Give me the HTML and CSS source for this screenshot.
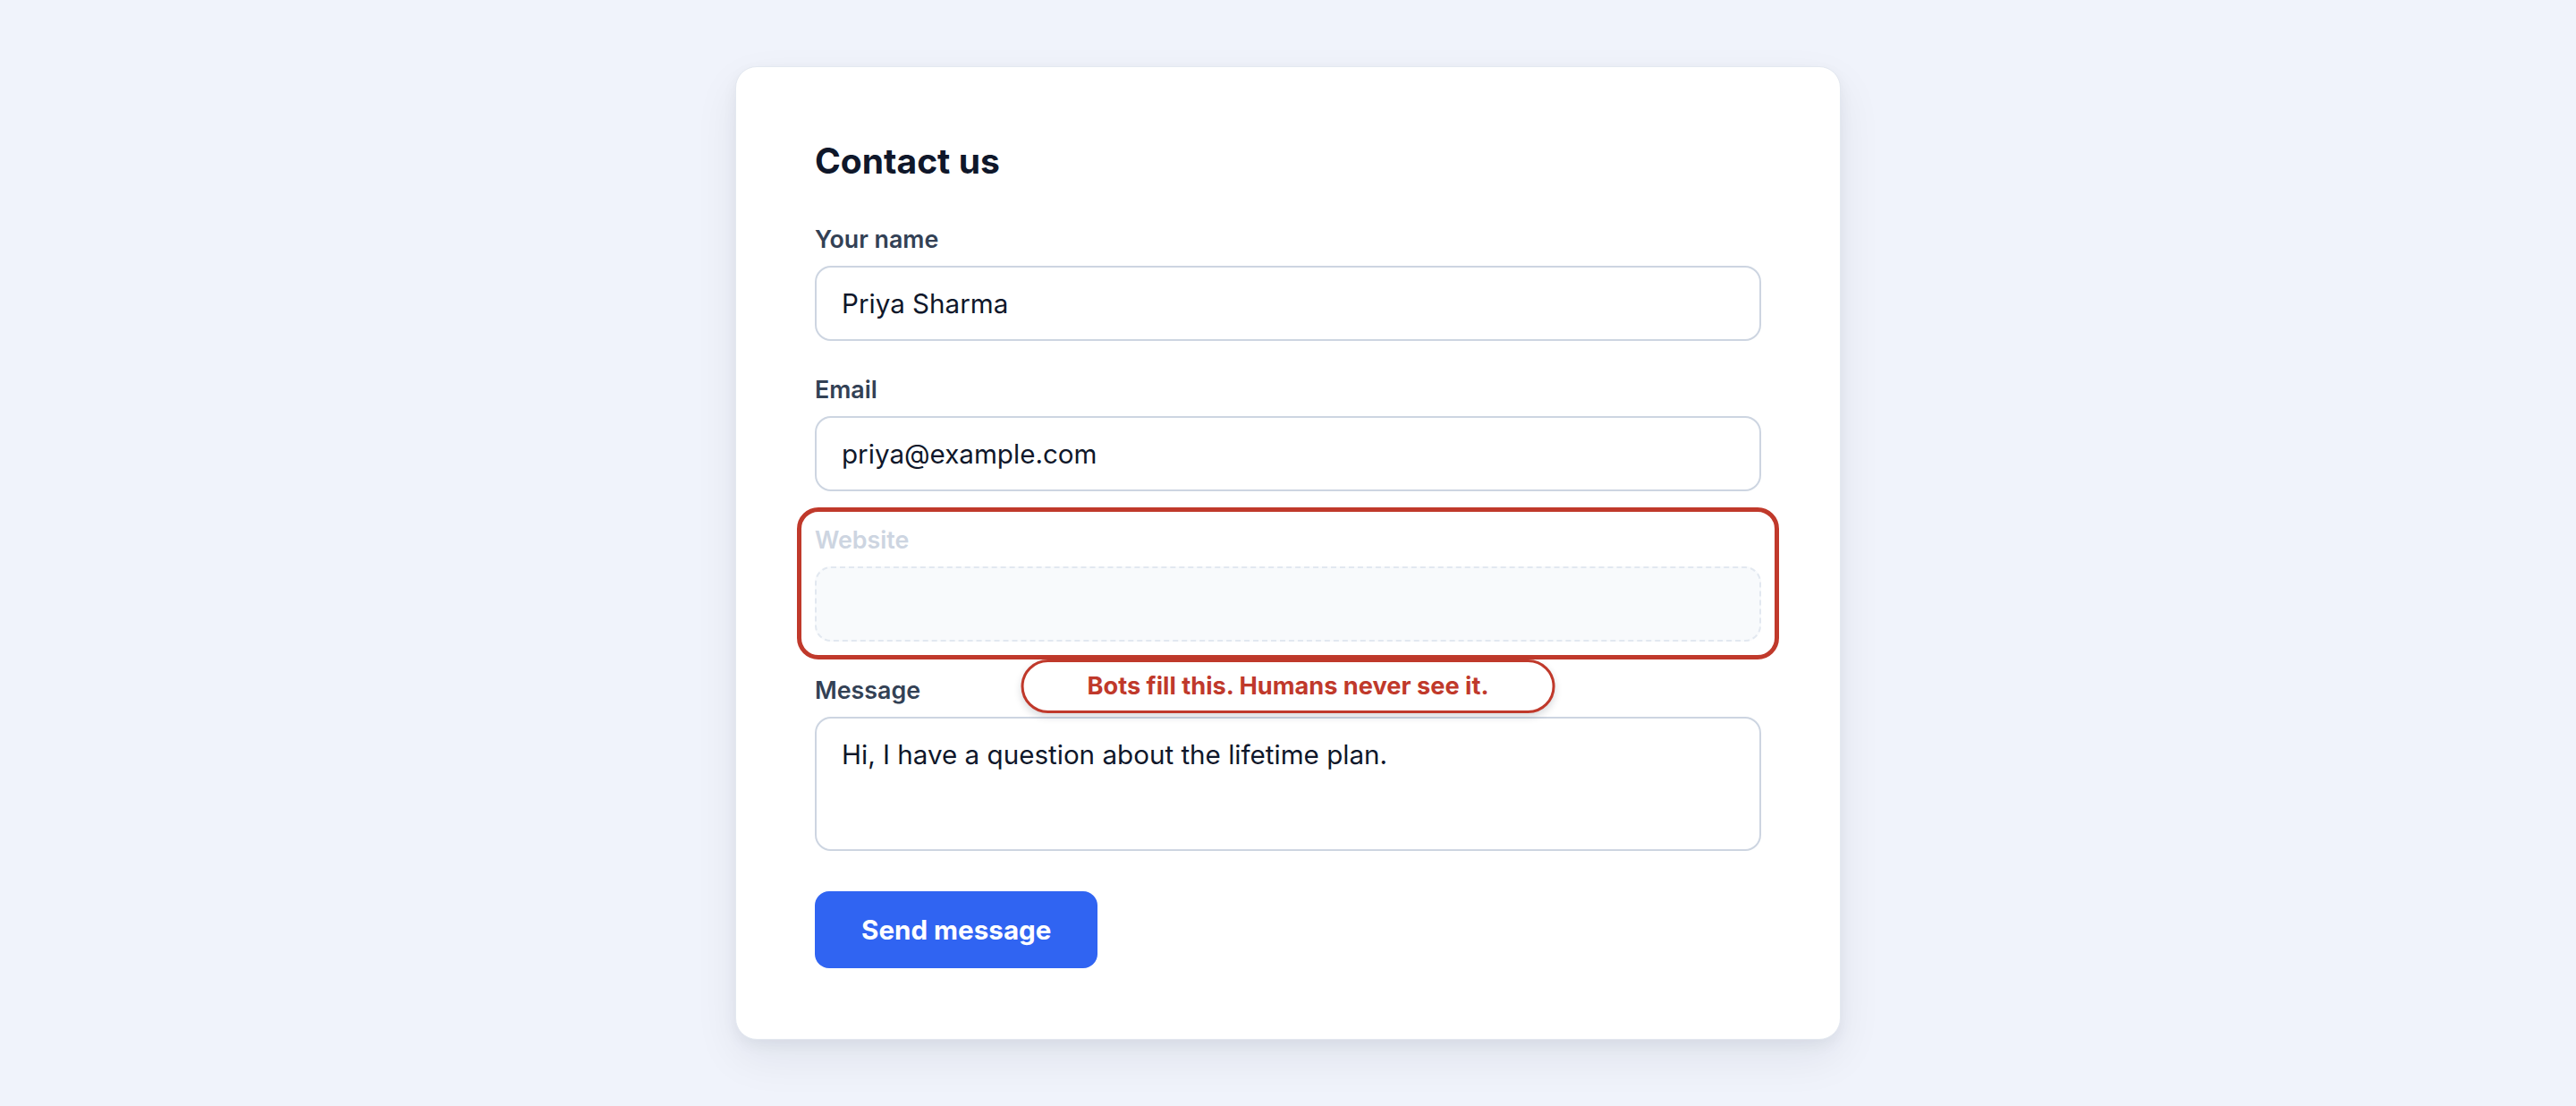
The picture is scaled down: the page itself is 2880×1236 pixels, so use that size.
FILE: index.html
```html
<!DOCTYPE html>
<html lang="en">
<head>
    <meta charset="UTF-8">
    <meta name="viewport" content="width=device-width, initial-scale=1.0">
    <title>Contact us</title>
    <link rel="stylesheet" href="styles.css">
</head>
<body>
    <main class="card">
        <h1 class="card-title">Contact us</h1>
        <form class="contact-form" onsubmit="return false;">
            <div class="field">
                <label for="name">Your name</label>
                <input type="text" id="name" value="Priya Sharma">
            </div>
            <div class="field">
                <label for="email">Email</label>
                <input type="email" id="email" value="priya@example.com">
            </div>
            <div class="field field-honeypot">
                <label for="website">Website</label>
                <input type="text" id="website" tabindex="-1" autocomplete="off">
                <span class="honeypot-note">Bots fill this. Humans never see it.</span>
            </div>
            <div class="field">
                <label for="message">Message</label>
                <textarea id="message">Hi, I have a question about the lifetime plan.</textarea>
            </div>
            <button type="submit" class="send-btn">Send message</button>
        </form>
    </main>
</body>
</html>
```

FILE: styles.css
```css
body {
    font-family: 'Inter', 'Noto Sans', sans-serif;
    display: flex;
    justify-content: center;
    align-items: center;
    min-height: 100vh;
    margin: 0;
    background: #f0f3fb;
    color: #0f172a;
}

.card {
    box-sizing: border-box;
    width: 1236px;
    padding: 82px 88px 79px;
    background: #ffffff;
    border: 1px solid #e3e8f0;
    border-radius: 24px;
    box-shadow: 0 6px 16px rgba(15, 23, 42, 0.05), 0 20px 50px rgba(15, 23, 42, 0.07);
}

.card-title {
    margin: 0 0 48px;
    font-size: 39px;
    line-height: 46px;
    font-weight: 700;
    color: #0f172a;
}

.contact-form {
    display: flex;
    flex-direction: column;
    gap: 38px;
}

.field label {
    display: block;
    margin-bottom: 14px;
    font-size: 26.8px;
    line-height: 32px;
    font-weight: 600;
    color: #334155;
}

.field input,
.field textarea {
    display: block;
    box-sizing: border-box;
    width: 100%;
    height: 84px;
    margin: 0;
    padding: 0 28px;
    border: 2px solid #cdd5e1;
    border-radius: 18px;
    background: #ffffff;
    font-family: inherit;
    font-size: 29.6px;
    color: #0f172a;
    outline: none;
}

.field textarea {
    height: 150px;
    padding: 19px 28px;
    line-height: 1.45;
    resize: none;
}

/* honeypot field, highlighted for the demo */
.field-honeypot {
    position: relative;
}

.field-honeypot::before {
    content: '';
    position: absolute;
    inset: -20px;
    border: 5px solid #c0392b;
    border-radius: 24px;
    pointer-events: none;
}

.field-honeypot label {
    color: #cdd5e1;
}

.field-honeypot input {
    border: 2px dashed #e2e8f0;
    background: #f8fafc;
}

.honeypot-note {
    position: absolute;
    top: calc(100% + 20px);
    left: 50%;
    transform: translateX(-50%);
    z-index: 2;
    box-sizing: border-box;
    height: 60px;
    padding: 0 71px;
    border: 3px solid #c0392b;
    border-radius: 30px;
    background: #ffffff;
    box-shadow: 0 4px 8px rgba(15, 23, 42, 0.16);
    font-size: 27.2px;
    line-height: 54px;
    font-weight: 700;
    color: #c0392b;
    white-space: nowrap;
}

.send-btn {
    align-self: flex-start;
    height: 86px;
    margin-top: 7px;
    padding: 0 52px;
    border: none;
    border-radius: 16px;
    background: #3064f2;
    font-family: inherit;
    font-size: 29.6px;
    font-weight: 700;
    color: #ffffff;
    cursor: pointer;
}

.send-btn:hover {
    background: #2555dd;
}
```
